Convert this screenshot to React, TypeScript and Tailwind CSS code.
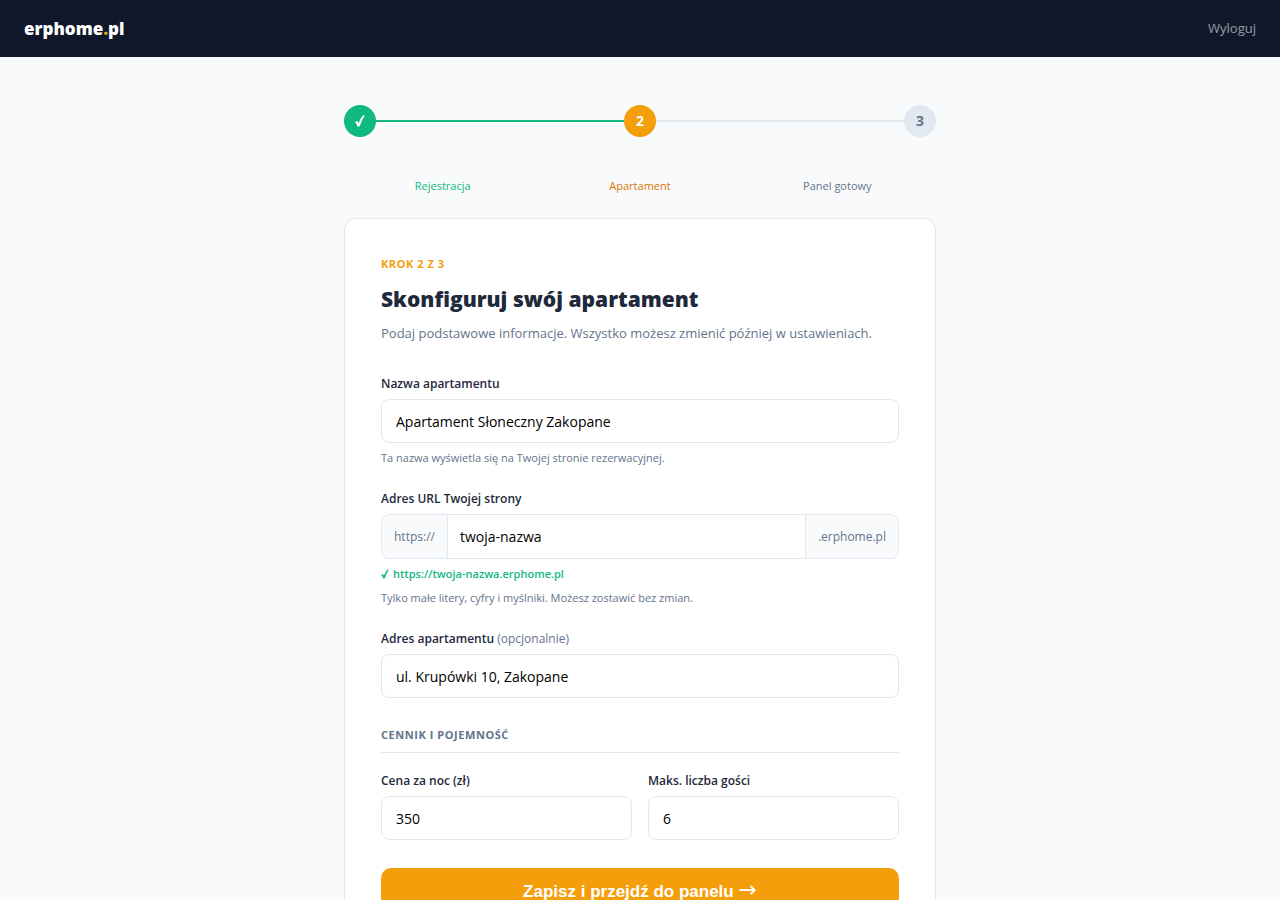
import React from "react";

interface FieldProps {
  id: string;
  label: string;
  value: string;
  type?: string;
  optional?: boolean;
  hint?: string;
}

function Field({ id, label, value, type = "text", optional, hint }: FieldProps) {
  return (
    <div>
      <label htmlFor={id} className="block text-[12px] leading-[22px] font-semibold text-[#1e293b]">
        {label}
        {optional && <span className="font-normal text-[#64748b]"> (opcjonalnie)</span>}
      </label>
      <input
        id={id}
        type={type}
        defaultValue={value}
        className="mt-1 block h-11 w-full rounded-lg border border-[#e2e8f0] bg-white px-3.5 text-sm text-black outline-none focus:border-[#f59e0b]"
      />
      {hint && <p className="mt-1.5 text-[11px] leading-[18px] text-[#64748b]">{hint}</p>}
    </div>
  );
}

function Check({ className }: { className: string }) {
  return (
    <svg viewBox="0 0 10 12" fill="currentColor" className={className} aria-hidden="true">
      <path d="M0 6.9 L2.1 5.9 Q3 6.8 3.6 8.2 Q5.3 3.6 7.9 0.6 L10 0.3 Q6.7 4.8 4.7 11.2 L2.7 11.7 Q1.7 8.5 0 6.9 Z" />
    </svg>
  );
}

function Steps() {
  return (
    <div>
      <div className="flex items-center text-sm font-bold">
        <div className="flex size-8 items-center justify-center rounded-full bg-[#10b981] text-white">
          <Check className="h-3 w-2.5" />
        </div>
        <div className="h-0.5 flex-1 bg-[#10b981]"></div>
        <div className="flex size-8 items-center justify-center rounded-full bg-[#f59e0b] text-white">2</div>
        <div className="h-0.5 flex-1 bg-[#e2e8f0]"></div>
        <div className="flex size-8 items-center justify-center rounded-full bg-[#e2e8f0] text-[#64748b]">3</div>
      </div>
      <div className="mt-10 grid grid-cols-3 text-center text-[11px] leading-[18px] font-medium">
        <span className="text-[#10b981]">Rejestracja</span>
        <span className="text-[#d97706]">Apartament</span>
        <span className="text-[#64748b]">Panel gotowy</span>
      </div>
    </div>
  );
}

export default function App() {
  return (
    <div className="min-h-screen bg-[#f8fafc] font-['Open_Sans','Noto_Sans',sans-serif] text-[#1e293b]">
      <header className="flex h-[57px] items-center justify-between bg-[#0f172a] px-6">
        <a href="#" className="text-[17px] leading-6 font-extrabold text-white">
          erphome<span className="text-[#f59e0b]">.</span>pl
        </a>
        <a href="#" className="text-[13px] text-white/55">Wyloguj</a>
      </header>

      <main className="mx-auto max-w-[640px] px-6 py-12">
        <Steps />

        <form className="mt-[23px] rounded-xl border border-[#e2e8f0] bg-white p-9">
          <p className="text-[11px] leading-[18px] font-bold tracking-wider text-[#f59e0b]">KROK 2 Z 3</p>
          <h1 className="mt-2 text-[21px] leading-9 font-extrabold">Skonfiguruj swój apartament</h1>
          <p className="mt-1 text-[13px] leading-6 text-[#64748b]">
            Podaj podstawowe informacje. Wszystko możesz zmienić później w ustawieniach.
          </p>

          <div className="mt-7 flex flex-col gap-[21px]">
            <Field
              id="name"
              label="Nazwa apartamentu"
              value="Apartament Słoneczny Zakopane"
              hint="Ta nazwa wyświetla się na Twojej stronie rezerwacyjnej."
            />

            <div>
              <label htmlFor="slug" className="block text-[12px] leading-[22px] font-semibold">
                Adres URL Twojej strony
              </label>
              <div className="mt-1 flex h-[45px] overflow-hidden rounded-lg border border-[#e2e8f0]">
                <span className="flex items-center border-r border-[#e2e8f0] bg-[#f8fafc] px-3 text-[12px] text-[#64748b]">
                  https://
                </span>
                <input
                  id="slug"
                  type="text"
                  defaultValue="twoja-nazwa"
                  className="min-w-0 flex-1 bg-white px-3 text-sm text-black outline-none"
                />
                <span className="flex items-center border-l border-[#e2e8f0] bg-[#f8fafc] px-3 text-[12px] text-[#64748b]">
                  .erphome.pl
                </span>
              </div>
              <p className="mt-1.5 flex items-center gap-1 text-[11px] leading-[18px] font-semibold text-[#10b981]">
                <Check className="h-2.5 w-2" />
                https://twoja-nazwa.erphome.pl
              </p>
              <p className="mt-1.5 text-[11px] leading-[18px] text-[#64748b]">
                Tylko małe litery, cyfry i myślniki. Możesz zostawić bez zmian.
              </p>
            </div>

            <Field id="address" label="Adres apartamentu" value="ul. Krupówki 10, Zakopane" optional />
          </div>

          <h2 className="mt-7 border-b border-[#e2e8f0] pb-2 text-[11px] leading-[18px] font-bold tracking-wider text-[#64748b]">
            CENNIK I POJEMNOŚĆ
          </h2>

          <div className="mt-[17px] grid grid-cols-2 gap-4">
            <Field id="price" label="Cena za noc (zł)" value="350" />
            <Field id="guests" label="Maks. liczba gości" value="6" />
          </div>

          <button
            type="submit"
            className="mt-7 h-12 w-full cursor-pointer rounded-[10px] bg-[#f59e0b] font-['Liberation_Sans',Arial,sans-serif] text-[17px] font-bold text-white hover:bg-[#d97706]"
          >
            Zapisz i przejdź do panelu{" "}
            <span className="font-['DejaVu_Sans',sans-serif] text-[22px] leading-none font-normal">→</span>
          </button>
        </form>
      </main>
    </div>
  );
}
